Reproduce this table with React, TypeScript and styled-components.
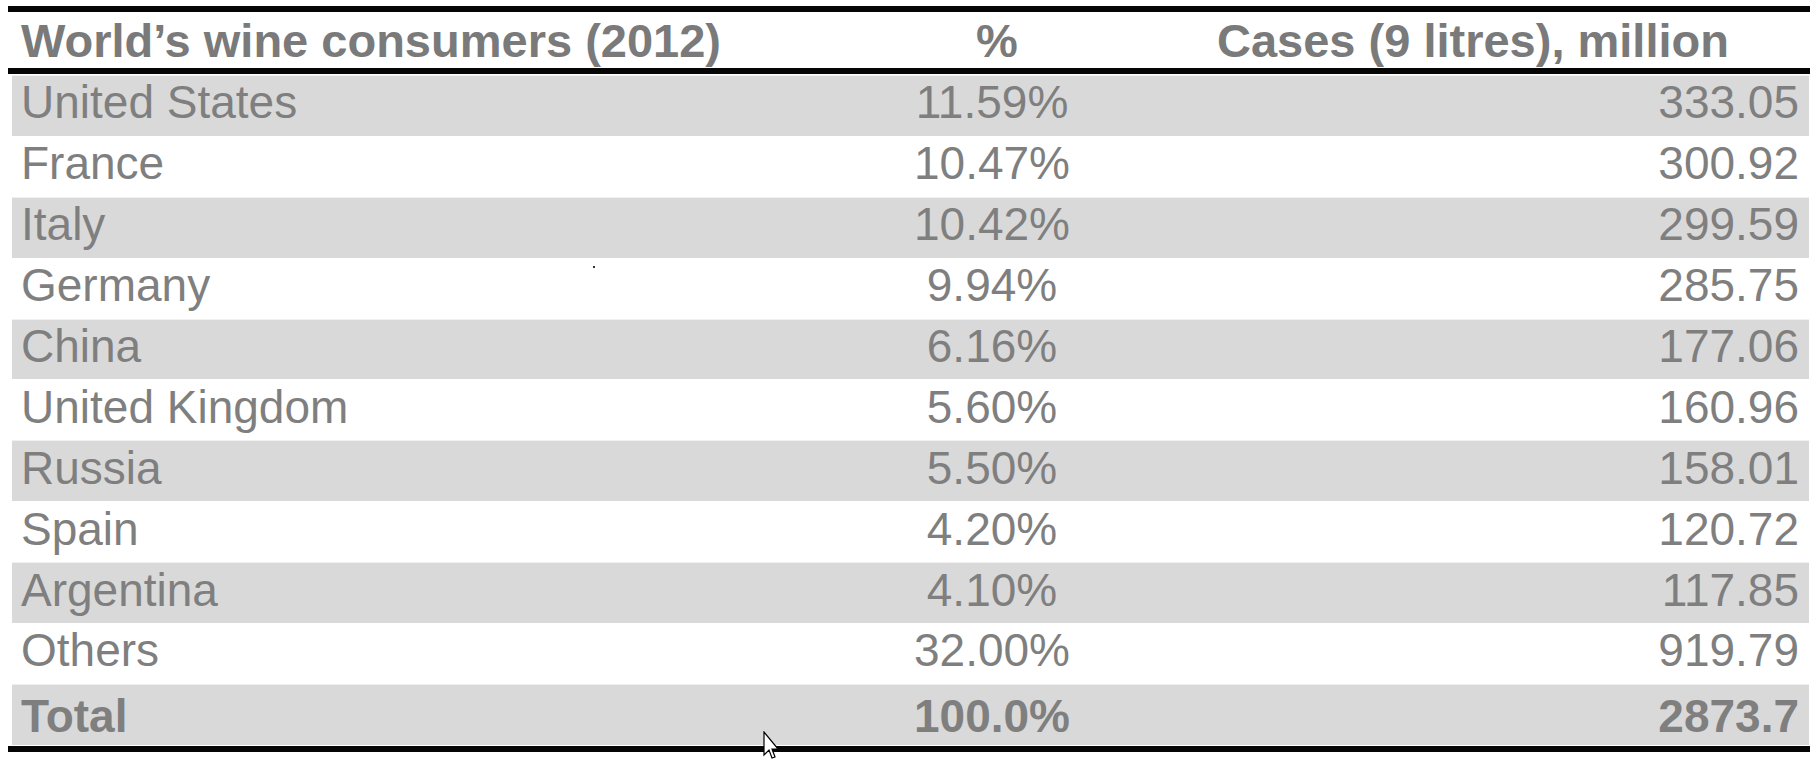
import React from "react";
import styled, { createGlobalStyle } from "styled-components";

const Global = createGlobalStyle`
  html, body { margin: 0; padding: 0; background: #ffffff; }
  body { font-family: "Liberation Sans", Arial, sans-serif; width: 1820px; height: 762px; overflow: hidden; }
`;

const Page = styled.div`
  position: relative;
  width: 1820px;
  height: 762px;
  padding: 6px 0 0 8px;
  box-sizing: border-box;
`;

const Table = styled.div`
  width: 1802px;
  display: flex;
  flex-direction: column;
  color: #7f7f7f;
`;

const Rule = styled.div<{ $gapBefore?: number }>`
  height: 6px;
  background: #050505;
  margin-top: ${(p) => p.$gapBefore ?? 0}px;
`;

const HeaderRow = styled.div`
  display: grid;
  grid-template-columns: 772px 424px 606px;
  height: 56px;
  align-items: center;
  font-weight: bold;
  font-size: 47px;
  color: #7a7a7a;
`;

const HeaderCell = styled.div<{ $align: "left" | "center" }>`
  line-height: 1;
  text-align: ${(p) => p.$align};
  padding-left: ${(p) => (p.$align === "left" ? 13 : 10)}px;
  white-space: nowrap;
`;

const Body = styled.div`
  display: flex;
  flex-direction: column;
  margin-top: 1px;
`;

const Row = styled.div<{ $shaded: boolean; $bold?: boolean }>`
  display: grid;
  grid-template-columns: 768px 424px 605px;
  height: 60.9px;
  margin: 0 1px 0 4px;
  align-items: center;
  background: ${(p) => (p.$shaded ? "#d9d9d9" : "#ffffff")};
  font-size: 46px;
  font-weight: ${(p) => (p.$bold ? "bold" : "normal")};
  box-shadow: inset 0 1px 0 rgba(255, 255, 255, 0.6);
`;

const Cell = styled.div<{ $align: "left" | "center" | "right"; $bold?: boolean }>`
  line-height: 1;
  white-space: nowrap;
  text-align: ${(p) => p.$align};
  padding-left: ${(p) => (p.$align === "left" ? 9 : 0)}px;
  padding-right: ${(p) => (p.$align === "right" ? 10 : 0)}px;
  padding-bottom: ${(p) => (p.$bold ? 0 : 6)}px;
  padding-top: ${(p) => (p.$bold ? 4 : 0)}px;
`;

const Cursor = styled.svg`
  position: absolute;
  left: 763px;
  top: 731px;
`;

const Speck = styled.div`
  position: absolute;
  left: 593px;
  top: 266px;
  width: 2px;
  height: 2px;
  background: #333;
`;

const rows: [string, string, string][] = [
  ["United States", "11.59%", "333.05"],
  ["France", "10.47%", "300.92"],
  ["Italy", "10.42%", "299.59"],
  ["Germany", "9.94%", "285.75"],
  ["China", "6.16%", "177.06"],
  ["United Kingdom", "5.60%", "160.96"],
  ["Russia", "5.50%", "158.01"],
  ["Spain", "4.20%", "120.72"],
  ["Argentina", "4.10%", "117.85"],
  ["Others", "32.00%", "919.79"],
];

export default function App() {
  return (
    <>
      <Global />
      <Page>
        <Table>
          <Rule />
          <HeaderRow>
            <HeaderCell $align="left">World’s wine consumers (2012)</HeaderCell>
            <HeaderCell $align="center">%</HeaderCell>
            <HeaderCell $align="left">Cases (9 litres), million</HeaderCell>
          </HeaderRow>
          <Rule />
          <Body>
            {rows.map(([country, pct, cases], i) => (
              <Row key={country} $shaded={i % 2 === 0}>
                <Cell $align="left">{country}</Cell>
                <Cell $align="center">{pct}</Cell>
                <Cell $align="right">{cases}</Cell>
              </Row>
            ))}
            <Row $shaded $bold>
              <Cell $align="left" $bold>Total</Cell>
              <Cell $align="center" $bold>100.0%</Cell>
              <Cell $align="right" $bold>2873.7</Cell>
            </Row>
          </Body>
          <Rule $gapBefore={1} />
        </Table>
        <Speck />
        <Cursor width="14" height="32" viewBox="0 0 14 32">
          <path d="M1 1 L1 24 L6 19 L9 27 L12 26 L9 18 L15 18 Z" fill="#ffffff" stroke="#000000" strokeWidth="1.2" strokeLinejoin="miter" />
        </Cursor>
      </Page>
    </>
  );
}
